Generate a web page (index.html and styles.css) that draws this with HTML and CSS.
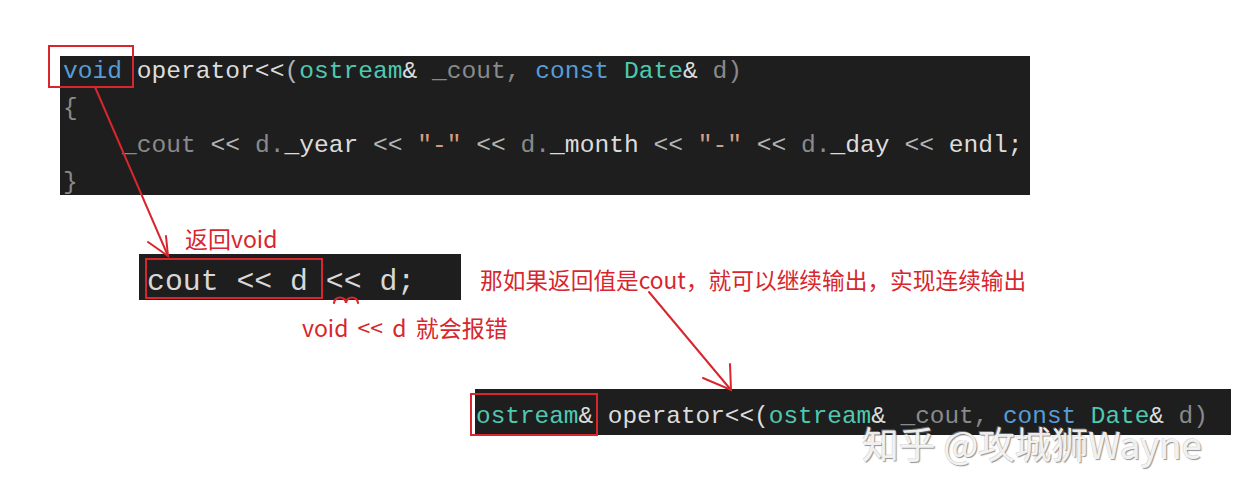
FILE: index.html
```html
<!DOCTYPE html>
<html lang="zh-CN">
<head>
<meta charset="utf-8">
<title>operator&lt;&lt; 返回值</title>
<link rel="stylesheet" href="styles.css">
</head>
<body>
<div class="stage">
  <div class="code code-main">
<pre><span class="kw">void</span><span class="tx"> operator&lt;&lt;</span><span class="pn">(</span><span class="ty">ostream</span><span class="tx">&amp;</span><span class="pm"> _cout,</span><span class="kw"> const</span><span class="ty"> Date</span><span class="tx">&amp;</span><span class="pm"> d)</span>
<span class="pm">{</span>
<span class="pm">    _cout</span><span class="op"> &lt;&lt; </span><span class="pm">d.</span><span class="tx">_year</span><span class="op"> &lt;&lt; </span><span class="st">"-"</span><span class="op"> &lt;&lt; </span><span class="pm">d.</span><span class="tx">_month</span><span class="op"> &lt;&lt; </span><span class="st">"-"</span><span class="op"> &lt;&lt; </span><span class="pm">d.</span><span class="tx">_day</span><span class="op"> &lt;&lt; </span><span class="tx">endl;</span>
<span class="pm">}</span></pre>
  </div>

  <p class="note note-void">返回void</p>

  <div class="row">
    <div class="code code-call">
      <pre class="big">cout &lt;&lt; d &lt;&lt; d;</pre>
    </div>
    <p class="note note-chain">那如果返回值是cout，就可以继续输出，实现连续输出</p>
  </div>

  <p class="note note-error">void &lt;&lt; d 就会报错</p>

  <div class="code code-sig">
<pre><span class="ty">ostream</span><span class="tx">&amp; operator&lt;&lt;(</span><span class="ty">ostream</span><span class="tx">&amp;</span><span class="pm"> _cout,</span><span class="kw"> const</span><span class="ty"> Date</span><span class="tx">&amp;</span><span class="pm"> d)</span></pre>
  </div>

  <div class="mark mark-void"></div>
  <div class="mark mark-cout"></div>
  <div class="mark mark-ostream"></div>

  <svg class="arrows" width="1234" height="500" viewBox="0 0 1234 500" aria-hidden="true">
    <g fill="none" stroke="#d7262e" stroke-width="2" stroke-linecap="round">
      <path d="M95 87 L168 256"/>
      <path d="M148 242 L168 256 L166 236"/>
      <path d="M649 292 L731 390"/>
      <path d="M703 378 L731 390 L730 364"/>
      <path d="M334 303 a6 5.5 0 0 1 12 0 a6 5.5 0 0 1 12 0" stroke-width="2.2"/>
    </g>
  </svg>

  <div class="watermark">知乎 @攻城狮Wayne</div>
</div>
</body>
</html>
```
FILE: styles.css
```css
html, body {
  margin: 0;
  padding: 0;
  background: #ffffff;
}

.stage {
  position: relative;
  width: 1234px;
  height: 500px;
  overflow: hidden;
  padding-top: 56px;
  box-sizing: border-box;
  background: #ffffff;
}

.code {
  display: flow-root;
  background: #1e1e1e;
  box-sizing: border-box;
}

.code pre {
  margin: 0;
  font-family: "Liberation Mono", "DejaVu Sans Mono", monospace;
  white-space: pre;
  color: #dcdcdc;
}

.code-main {
  margin-left: 60px;
  width: 970px;
  height: 139px;
  padding-left: 3px;
}

.code-main pre {
  margin-top: -3px;
  font-size: 24.6px;
  line-height: 37px;
}

.code-call {
  margin-left: 139px;
  width: 322px;
  height: 46px;
  padding: 10px 0 0 8px;
  flex: none;
}

.code-call pre.big {
  font-size: 29.8px;
  line-height: 36px;
  color: #d8d8d8;
}

.code-sig {
  margin: 49px 0 0 475px;
  width: 756px;
  height: 46px;
  padding: 9px 0 0 1px;
}

.code-sig pre {
  font-size: 24.4px;
  line-height: 37px;
}

.kw { color: #569cd6; }
.ty { color: #4ec9b0; }
.tx { color: #dcdcdc; }
.pn { color: #b4b4b4; }
.pm { color: #8a8a8a; }
.op { color: #b4b4b4; }
.st { color: #d69d85; }

.row {
  display: flex;
  align-items: flex-start;
  margin-top: 3px;
}

.note {
  margin: 0;
  font-family: "Noto Sans CJK SC", "Noto Sans", sans-serif;
  font-size: 23px;
  line-height: 26px;
  color: #d7262e;
  white-space: nowrap;
}

.note-void {
  margin: 30px 0 0 185px;
}

.note-chain {
  margin: 13px 0 0 19px;
  font-size: 22.7px;
}

.note-error {
  margin: 14px 0 0 302px;
  word-spacing: 4px;
}

/* annotation overlays */
.mark {
  position: absolute;
  border: 2px solid #d7262e;
  box-sizing: border-box;
}

.mark-void {
  left: 48px;
  top: 45px;
  width: 86px;
  height: 43px;
}

.mark-cout {
  left: 145px;
  top: 258px;
  width: 178px;
  height: 41px;
}

.mark-ostream {
  left: 470px;
  top: 393px;
  width: 128px;
  height: 43px;
}

.arrows {
  position: absolute;
  left: 0;
  top: 0;
  pointer-events: none;
}

.watermark {
  position: absolute;
  left: 862px;
  top: 423px;
  font-family: "Noto Sans CJK SC", "Noto Sans", sans-serif;
  font-size: 37px;
  line-height: 40px;
  letter-spacing: -0.3px;
  color: rgba(250, 250, 250, 0.92);
  text-shadow: 1px 1px 1px rgba(110, 110, 110, 0.75), -1px -1px 0 rgba(190, 190, 190, 0.45);
  white-space: nowrap;
  pointer-events: none;
}
```
